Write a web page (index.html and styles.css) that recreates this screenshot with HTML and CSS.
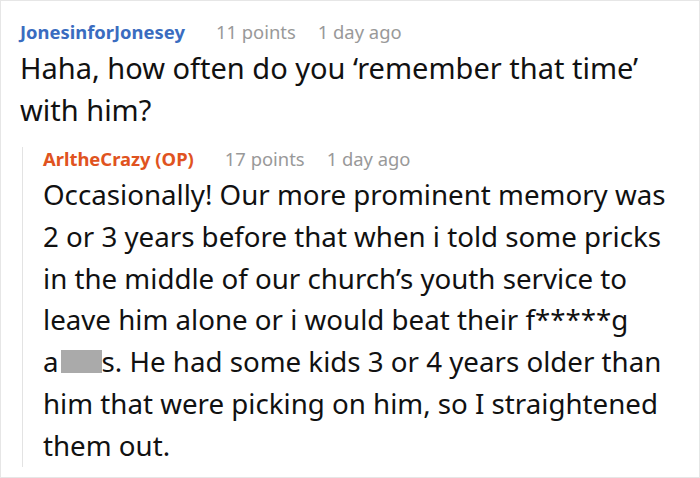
FILE: index.html
```html
<!DOCTYPE html>
<html lang="en">
<head>
<meta charset="utf-8">
<title>Comment thread</title>
<link rel="stylesheet" href="styles.css">
</head>
<body>
<div class="thread">
  <div class="comment">
    <div class="meta">
      <span class="author">JonesinforJonesey</span>
      <span class="points">11 points</span>
      <span class="time">1 day ago</span>
    </div>
    <p class="body">Haha, how often do you ‘remember that time’ with him?</p>
  </div>
  <div class="reply">
    <div class="meta">
      <span class="author op">ArltheCrazy (OP)</span>
      <span class="points">17 points</span>
      <span class="time">1 day ago</span>
    </div>
    <p class="body">Occasionally! Our more prominent memory was 2 or 3 years before that when i told some pricks in the middle of our church’s youth service to leave him alone or i would beat their f*****g <span class="word">a<span class="redact"></span>s.</span> He had some kids 3 or 4 years older than him that were picking on him, so I straightened them out.</p>
  </div>
</div>
</body>
</html>
```
FILE: styles.css
```css
html, body {
  margin: 0;
  padding: 0;
  background: #fff;
}
.thread {
  box-sizing: border-box;
  width: 700px;
  height: 478px;
  border: 1px solid #e6e6e6;
  padding: 19px 14px 0 19px;
  font-family: "Noto Sans", "Open Sans", sans-serif;
  color: #111;
}
.meta {
  display: flex;
  align-items: center;
  height: 22px;
  font-size: 18.4px;
  color: #999;
}
.author {
  font-weight: 700;
  color: #3a6cc0;
  margin-right: 31px;
}
.author.op {
  color: #e05320;
}
.points {
  margin-right: 22px;
}
.body {
  margin: 5px 0 0;
  font-size: 29px;
  line-height: 42px;
}
.reply {
  margin: 16px 0 0 2px;
  border-left: 1px solid #e3e3e3;
  padding-left: 20px;
}
.reply .body {
  margin-top: 5px;
  font-size: 27.7px;
  line-height: 41.8px;
}
.word {
  white-space: nowrap;
}
.redact {
  display: inline-block;
  width: 41px;
  height: 23px;
  margin-left: 2px;
  vertical-align: -1px;
  background: #aaa;
}
```
